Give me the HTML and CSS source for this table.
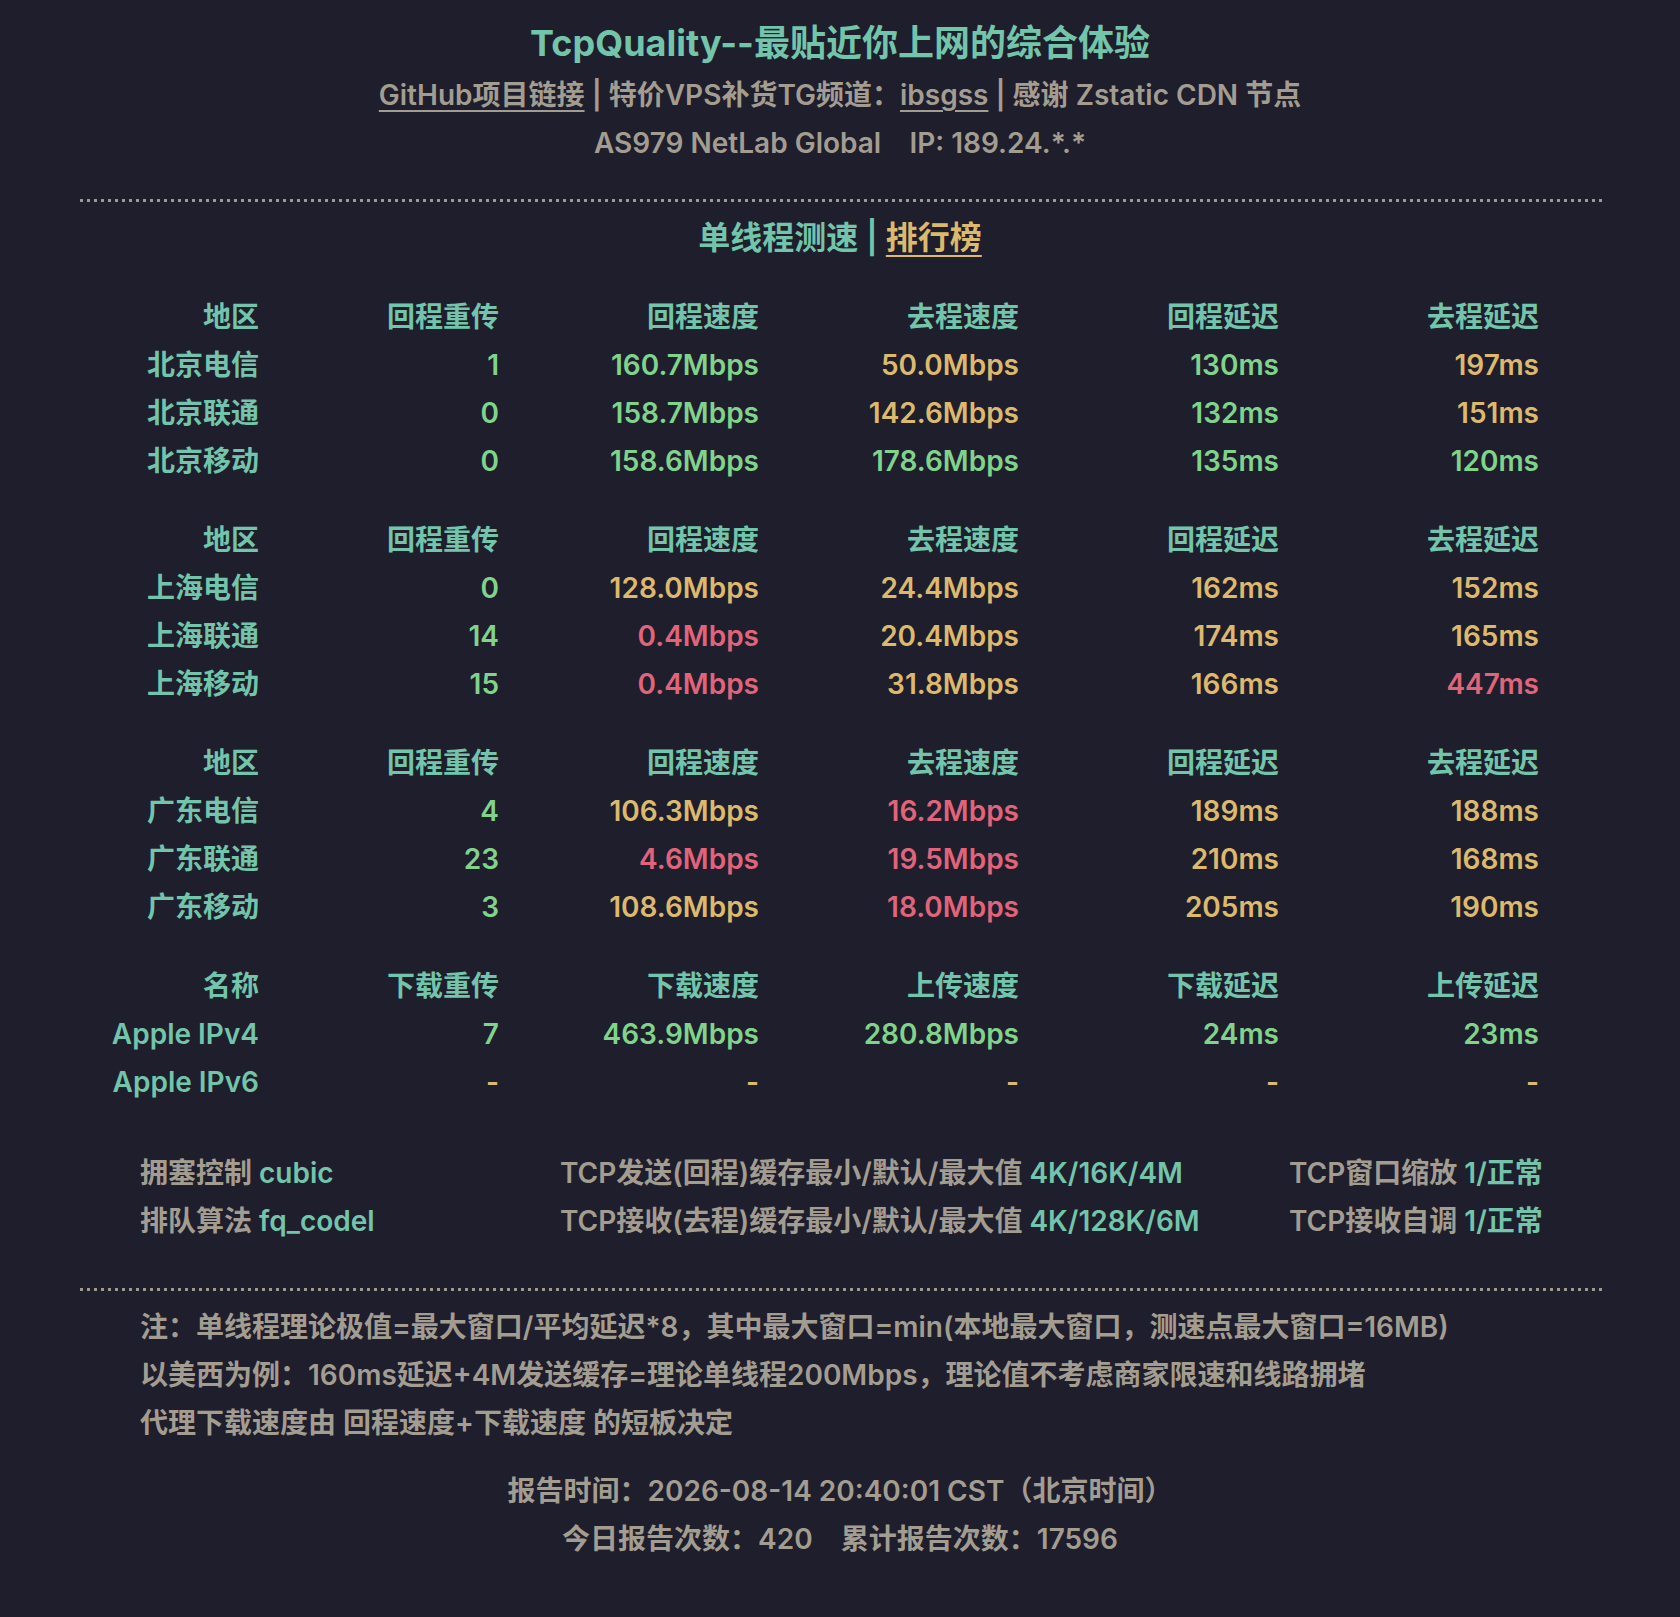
FILE: index.html
```html
<!DOCTYPE html>
<html lang="zh-CN">
<head>
<meta charset="utf-8">
<title>TcpQuality</title>
<link rel="stylesheet" href="styles.css">
</head>
<body>
<div class="page">
  <h1 class="title">TcpQuality--最贴近你上网的综合体验</h1>
  <div class="links"><a class="ul">GitHub项目链接</a> <span class="sep">|</span> 特价VPS补货TG频道：<a class="ul">ibsgss</a> <span class="sep">|</span> 感谢 Zstatic CDN 节点</div>
  <div class="asn">AS979 NetLab Global&nbsp;&nbsp;&nbsp;&nbsp;IP: 189.24.*.*</div>
  <div class="dots"></div>
  <div class="section-title">单线程测速 <span class="bar">|</span> <a class="rank">排行榜</a></div>

  <div class="grid">
    <div class="h">地区</div><div class="h">回程重传</div><div class="h">回程速度</div><div class="h">去程速度</div><div class="h">回程延迟</div><div class="h">去程延迟</div>
    <div class="n">北京电信</div><div class="g">1</div><div class="g">160.7Mbps</div><div class="y">50.0Mbps</div><div class="g">130ms</div><div class="y">197ms</div>
    <div class="n">北京联通</div><div class="g">0</div><div class="g">158.7Mbps</div><div class="y">142.6Mbps</div><div class="g">132ms</div><div class="y">151ms</div>
    <div class="n">北京移动</div><div class="g">0</div><div class="g">158.6Mbps</div><div class="g">178.6Mbps</div><div class="g">135ms</div><div class="g">120ms</div>
  </div>

  <div class="grid">
    <div class="h">地区</div><div class="h">回程重传</div><div class="h">回程速度</div><div class="h">去程速度</div><div class="h">回程延迟</div><div class="h">去程延迟</div>
    <div class="n">上海电信</div><div class="g">0</div><div class="y">128.0Mbps</div><div class="y">24.4Mbps</div><div class="y">162ms</div><div class="y">152ms</div>
    <div class="n">上海联通</div><div class="g">14</div><div class="r">0.4Mbps</div><div class="y">20.4Mbps</div><div class="y">174ms</div><div class="y">165ms</div>
    <div class="n">上海移动</div><div class="g">15</div><div class="r">0.4Mbps</div><div class="y">31.8Mbps</div><div class="y">166ms</div><div class="r">447ms</div>
  </div>

  <div class="grid">
    <div class="h">地区</div><div class="h">回程重传</div><div class="h">回程速度</div><div class="h">去程速度</div><div class="h">回程延迟</div><div class="h">去程延迟</div>
    <div class="n">广东电信</div><div class="g">4</div><div class="y">106.3Mbps</div><div class="r">16.2Mbps</div><div class="y">189ms</div><div class="y">188ms</div>
    <div class="n">广东联通</div><div class="g">23</div><div class="r">4.6Mbps</div><div class="r">19.5Mbps</div><div class="y">210ms</div><div class="y">168ms</div>
    <div class="n">广东移动</div><div class="g">3</div><div class="y">108.6Mbps</div><div class="r">18.0Mbps</div><div class="y">205ms</div><div class="y">190ms</div>
  </div>

  <div class="grid">
    <div class="h">名称</div><div class="h">下载重传</div><div class="h">下载速度</div><div class="h">上传速度</div><div class="h">下载延迟</div><div class="h">上传延迟</div>
    <div class="n">Apple IPv4</div><div class="g">7</div><div class="g">463.9Mbps</div><div class="g">280.8Mbps</div><div class="g">24ms</div><div class="g">23ms</div>
    <div class="n">Apple IPv6</div><div class="y">-</div><div class="y">-</div><div class="y">-</div><div class="y">-</div><div class="y">-</div>
  </div>

  <div class="sysinfo">
    <div>拥塞控制 <span class="v">cubic</span></div>
    <div>TCP发送(回程)缓存最小/默认/最大值 <span class="v">4K/16K/4M</span></div>
    <div class="end">TCP窗口缩放 <span class="v">1/正常</span></div>
    <div>排队算法 <span class="v">fq_codel</span></div>
    <div>TCP接收(去程)缓存最小/默认/最大值 <span class="v">4K/128K/6M</span></div>
    <div class="end">TCP接收自调 <span class="v">1/正常</span></div>
  </div>

  <div class="dots dots-lower"></div>

  <div class="notes">
    <div>注：单线程理论极值=最大窗口/平均延迟*8，其中最大窗口=min(本地最大窗口，测速点最大窗口=16MB)</div>
    <div>以美西为例：160ms延迟+4M发送缓存=理论单线程200Mbps，理论值不考虑商家限速和线路拥堵</div>
    <div>代理下载速度由 回程速度+下载速度 的短板决定</div>
  </div>

  <div class="report">
    <div>报告时间：2026-08-14 20:40:01 CST（北京时间）</div>
    <div>今日报告次数：420&nbsp;&nbsp;&nbsp;&nbsp;累计报告次数：17596</div>
  </div>
</div>
</body>
</html>
```

FILE: styles.css
```css
html, body {
  margin: 0;
  padding: 0;
  background: #1f1e2c;
}

body {
  font-family: "Inter", "Noto Sans CJK SC", sans-serif;
  font-weight: 600;
  font-size: 28px;
  line-height: 48px;
  color: #a39d91;
}

.page {
  width: 1524px;
  margin: 0 auto;
  padding: 15px 0 34px;
}

.title {
  margin: 0;
  font-size: 36px;
  line-height: 56px;
  font-weight: 700;
  text-align: center;
  color: #72c4aa;
}

.links, .asn {
  text-align: center;
}

.ul {
  color: #a39d91;
  text-decoration: underline;
  text-underline-offset: 5px;
  text-decoration-thickness: 2px;
}

.dots {
  height: 3px;
  margin: 32px 0 12px;
  background-image: radial-gradient(circle, #a39d91 1.4px, transparent 1.6px);
  background-size: 7px 3px;
  background-repeat: repeat-x;
}

.dots-lower {
  margin-top: 43px;
}

.section-title {
  text-align: center;
  font-size: 32px;
  color: #72c4aa;
}

.bar {
  color: #72c4aa;
}

.rank {
  color: #dcb96d;
  text-decoration: underline;
  text-underline-offset: 6px;
  text-decoration-thickness: 2px;
}

.grid {
  display: grid;
  grid-template-columns: 181px 240px 260px 260px 260px 260px;
  text-align: right;
  white-space: nowrap;
  margin-bottom: 31px;
}

.section-title + .grid {
  margin-top: 31px;
}

.h, .n { color: #72c4aa; }
.g { color: #80d38b; }
.y { color: #dcb96d; }
.r { color: #e0647a; }

.sysinfo {
  display: grid;
  grid-template-columns: 420px 729px 251px;
  margin: 43px 62px 0;
  white-space: nowrap;
}

.sysinfo .end {
  text-align: right;
}

.v {
  color: #72c4aa;
}

.notes {
  margin: 0 62px;
}

.report {
  margin-top: 20px;
  text-align: center;
}
```
